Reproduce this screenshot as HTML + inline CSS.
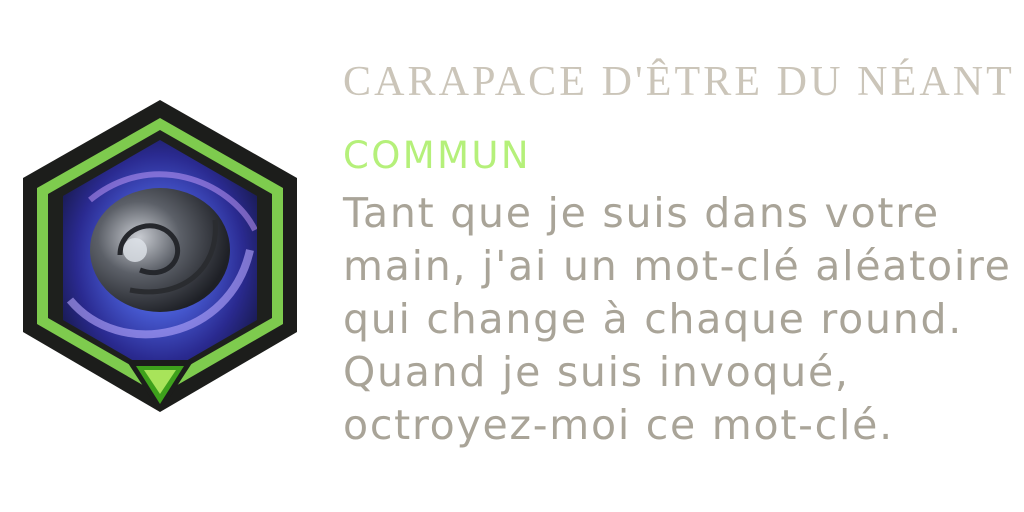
<!DOCTYPE html>
<html><head><meta charset="utf-8"><style>
html,body{margin:0;padding:0;background:#fff;width:1024px;height:512px;overflow:hidden;position:relative}
.t{position:absolute;left:343px;top:58px;font-family:"Liberation Serif",serif;font-size:42px;color:#cbc5b9;letter-spacing:3.1px;white-space:nowrap}
.c{position:absolute;left:343px;top:134px;font-family:"DejaVu Sans",sans-serif;font-size:37px;color:#b5f07a;white-space:nowrap;letter-spacing:2.4px}
.b{position:absolute;left:343px;top:187px;font-family:"DejaVu Sans",sans-serif;font-size:41px;line-height:53px;color:#a9a498;white-space:nowrap;letter-spacing:1.75px}
svg{position:absolute;left:0;top:0}
</style></head><body>
<svg width="320" height="430" viewBox="0 0 320 430">
<defs>
<radialGradient id="sp" cx="50%" cy="50%" r="60%">
<stop offset="0" stop-color="#c8d8ff"/><stop offset="0.35" stop-color="#4a5fd8"/><stop offset="0.7" stop-color="#2a2a90"/><stop offset="1" stop-color="#141640"/></radialGradient>
<radialGradient id="ball" cx="35%" cy="40%" r="65%">
<stop offset="0" stop-color="#c9ccd2"/><stop offset="0.45" stop-color="#5c6068"/><stop offset="1" stop-color="#1e2026"/></radialGradient>
<clipPath id="hx"><polygon points="160,140 257,196 257,320 160,376 63,320 63,196"/></clipPath>
</defs>
<polygon points="160,100 297,178 297,332 160,412 23,332 23,178" fill="#1c1d1b"/>
<polygon points="160,118 283,188 283,324 160,395 37,324 37,188" fill="#7ecb4e"/>
<polygon points="160,130 272,194 272,318 160,382 48,318 48,194" fill="#1e201d"/>
<g clip-path="url(#hx)">
<rect x="60" y="135" width="200" height="245" fill="url(#sp)"/>
<path d="M70,300 C120,360 230,340 250,250" stroke="#b7a8ff" stroke-width="8" fill="none" opacity="0.6"/>
<path d="M90,200 C150,150 230,180 255,230" stroke="#c9a0ff" stroke-width="6" fill="none" opacity="0.5"/>
<ellipse cx="160" cy="250" rx="70" ry="62" fill="url(#ball)"/>
<path d="M120,255 C120,225 160,215 175,240 C185,260 165,280 140,270" stroke="#25272c" stroke-width="5" fill="none"/>
<path d="M130,290 C180,300 220,270 215,220" stroke="#2a2c30" stroke-width="5" fill="none"/>
<circle cx="135" cy="250" r="12" fill="#dfe4ea" opacity="0.8"/>
</g>
<polygon points="126,360 194,360 160,412" fill="#1c1d1b"/>
<polygon points="136,366 184,366 160,404" fill="#3ea11c"/>
<polygon points="144,370 176,370 160,394" fill="#a8e45a"/>
</svg>
<div class="t">CARAPACE D'ÊTRE DU NÉANT</div>
<div class="c">COMMUN</div>
<div class="b">Tant que je suis dans votre<br>main, j'ai un mot-clé aléatoire<br>qui change à chaque round.<br>Quand je suis invoqué,<br>octroyez-moi ce mot-clé.</div>
</body></html>
